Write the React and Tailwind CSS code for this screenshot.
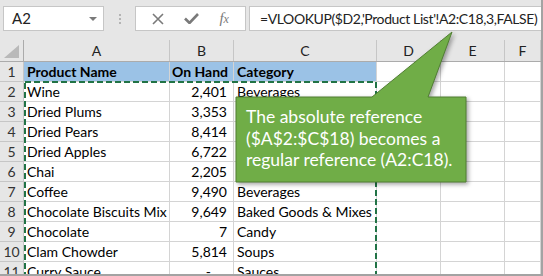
const rows = [
  ['Wine', '2,401', 'Beverages'],
  ['Dried Plums', '3,353', ''],
  ['Dried Pears', '8,414', ''],
  ['Dried Apples', '6,722', ''],
  ['Chai', '2,205', ''],
  ['Coffee', '9,490', 'Beverages'],
  ['Chocolate Biscuits Mix', '9,649', 'Baked Goods & Mixes'],
  ['Chocolate', '7', 'Candy'],
  ['Clam Chowder', '5,814', 'Soups'],
  ['Curry Sauce', '-', 'Sauces'],
]

const cols = [
  { key: 'A', w: 'w-[146px]' },
  { key: 'B', w: 'w-[64px]' },
  { key: 'C', w: 'w-[143px]' },
  { key: 'D', w: 'w-[64px]' },
  { key: 'E', w: 'w-[64px]' },
  { key: 'F', w: 'flex-1' },
]

function Cell({ w, children, className = '' }) {
  return (
    <div className={`${w} shrink-0 h-full border-r border-b border-[#d4d4d4] flex items-center overflow-hidden whitespace-nowrap ${className}`}>
      {children}
    </div>
  )
}

function RowHead({ children }) {
  return (
    <div className="w-[24px] shrink-0 h-full border-r border-b border-[#c6c6c6] bg-[#e6e6e6] flex items-center justify-center text-[#333]">
      {children}
    </div>
  )
}

export default function App() {
  return (
    <div
      className="relative w-[543px] h-[276px] overflow-hidden bg-white border-r-2 border-b-2 border-[#a3a3a3] text-[14px] text-black"
      style={{ fontFamily: 'Lato, "Open Sans", sans-serif' }}
    >
      {/* formula bar */}
      <div className="h-[40px] bg-[#e6e6e6] flex items-start pt-[6px] pl-[3px]">
        <div className="w-[101px] h-[25px] bg-white border border-[#c6c6c6] flex items-center justify-between pl-[8px] pr-[6px]">
          <span className="text-[#222] text-[15px]">A2</span>
          <span className="w-0 h-0 border-l-[4px] border-r-[4px] border-t-[4px] border-l-transparent border-r-transparent border-t-[#7a7a7a]" />
        </div>
        <div className="w-[31px] h-[25px] flex flex-col items-center justify-center gap-[2px]">
          <span className="w-[2px] h-[2px] bg-[#b4b4b4]" />
          <span className="w-[2px] h-[2px] bg-[#b4b4b4]" />
          <span className="w-[2px] h-[2px] bg-[#b4b4b4]" />
        </div>
        <div className="w-[111px] h-[25px] bg-white border border-[#c6c6c6] flex items-center justify-around px-[6px]">
          <svg width="12" height="12" viewBox="0 0 12 12">
            <path d="M1 1 L11 11 M11 1 L1 11" stroke="#7a7a7a" strokeWidth="1.6" />
          </svg>
          <svg width="15" height="11" viewBox="0 0 15 11">
            <path d="M1 5.5 L5.5 10 L14 1" stroke="#7a7a7a" strokeWidth="2.6" fill="none" />
          </svg>
          <span className="text-[#7a7a7a] text-[15px] leading-none" style={{ fontFamily: '"Liberation Serif", serif' }}>
            <i>f</i><span className="text-[12px] italic">x</span>
          </span>
        </div>
        <div className="flex-1 h-[25px] ml-[3px] bg-white border border-[#c6c6c6] border-r-0 flex items-center pl-[10px] whitespace-nowrap overflow-hidden text-[#222] tracking-[-0.4px]">
          =VLOOKUP($D2,'Product List'!A2:C18,3,FALSE)
        </div>
      </div>

      {/* column headers */}
      <div className="h-[22px] flex bg-[#e6e6e6] border-b border-[#ababab]">
        <div className="w-[24px] shrink-0 h-full border-r border-[#ababab] relative">
          <div className="absolute left-[4px] top-[5px] w-0 h-0 border-b-[13px] border-l-[15px] border-b-[#b9b9b9] border-l-transparent" />
        </div>
        {cols.map((c) => (
          <div key={c.key} className={`${c.w} shrink-0 h-full border-r border-[#c6c6c6] flex items-center justify-center text-[#222]`}>
            {c.key}
          </div>
        ))}
      </div>

      {/* row 1 */}
      <div className="h-[20px] flex">
        <RowHead>1</RowHead>
        <Cell w="w-[146px]" className="bg-[#9bc2e6] font-bold pl-[3px]">Product Name</Cell>
        <Cell w="w-[64px]" className="bg-[#9bc2e6] font-bold justify-end pr-[5px]">On Hand</Cell>
        <Cell w="w-[143px]" className="bg-[#9bc2e6] font-bold pl-[3px]">Category</Cell>
        <Cell w="w-[64px]" />
        <Cell w="w-[64px]" />
        <Cell w="flex-1" />
      </div>

      {rows.map((r, i) => (
        <div key={i} className="h-[20px] flex">
          <RowHead>{i + 2}</RowHead>
          <Cell w="w-[146px]" className="pl-[3px]">{r[0]}</Cell>
          <Cell w="w-[64px]" className={`justify-end ${r[1] === '-' ? 'pr-[22px]' : 'pr-[6px]'}`}>{r[1]}</Cell>
          <Cell w="w-[143px]" className="pl-[3px]">{r[2]}</Cell>
          <Cell w="w-[64px]" />
          <Cell w="w-[64px]" />
          <Cell w="flex-1" />
        </div>
      ))}

      {/* copy selection marquee */}
      <svg className="absolute left-0 top-0 pointer-events-none" width="543" height="276">
        <rect x="25" y="82" width="351" height="260" fill="none" stroke="#217346" strokeWidth="2" strokeDasharray="6 3" />
      </svg>

      {/* callout */}
      <svg className="absolute left-0 top-0 [filter:drop-shadow(2px_2px_2px_rgba(0,0,0,0.35))]" width="543" height="276">
        <path d="M236 97 L372 97 L452 32 L428 97 L466 97 L466 182 L236 182 Z" fill="#70ad47" stroke="#507e32" strokeWidth="1" />
      </svg>
      <div className="absolute left-[246px] top-[106px] text-white text-[17.5px] leading-[21.5px]">
        <div>The absolute reference</div>
        <div>($A$2:$C$18) becomes a</div>
        <div>regular reference (A2:C18).</div>
      </div>
    </div>
  )
}
